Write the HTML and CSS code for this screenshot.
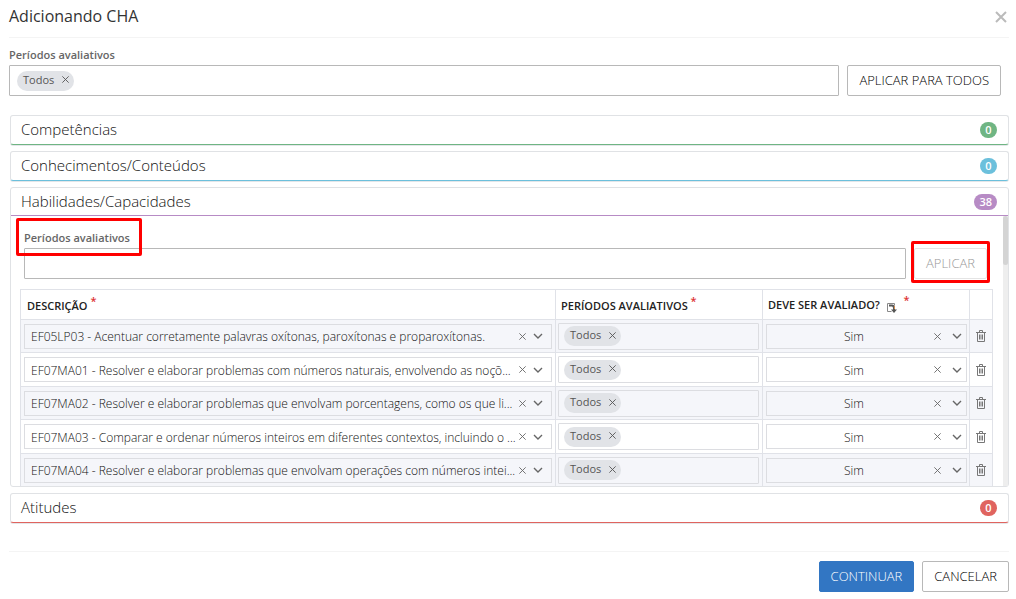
FILE: index.html
```html
<!DOCTYPE html>
<html lang="pt-BR">
<head>
<meta charset="utf-8">
<title>Adicionando CHA</title>
<link rel="stylesheet" href="styles.css">
</head>
<body>
<svg class="defs" aria-hidden="true">
  <symbol id="x" viewBox="0 0 10 10"><path d="M1.500 1.500l7 7M8.500 1.500l-7 7" fill="none" stroke="currentColor"/></symbol>
  <symbol id="chev" viewBox="0 0 10 10"><path d="M1 3l4 4 4-4" fill="none" stroke="currentColor" stroke-width="1.400"/></symbol>
  <symbol id="trash" viewBox="0 0 10 12"><path d="M0 2.500h10M3.500 2.500v-2h3v2M1.500 2.500v9h7v-9M3.500 4.500v5M5 4.500v5M6.500 4.500v5" fill="none" stroke="currentColor"/></symbol>
</svg>
<main class="modal">
  <header class="modal-head">
    <h1>Adicionando CHA</h1>
    <button class="close" aria-label="Fechar"><svg viewBox="0 0 12 12"><path d="M1 1l10 10M11 1L1 11" fill="none" stroke="currentColor" stroke-width="2"/></svg></button>
  </header>

  <section class="apply">
    <div class="field">
      <label for="periodos">Períodos avaliativos</label>
      <div class="tags">
        <span class="chip">Todos<button aria-label="Remover Todos"><svg><use href="#x"/></svg></button></span>
        <input id="periodos" type="text">
      </div>
    </div>
    <button class="btn">APLICAR PARA TODOS</button>
  </section>

  <section class="panels">
    <div class="panel green"><h2>Competências</h2><span class="badge">0</span></div>
    <div class="panel blue"><h2>Conhecimentos/Conteúdos</h2><span class="badge">0</span></div>
    <div class="group">
      <div class="panel purple"><h2>Habilidades/Capacidades</h2><span class="badge">38</span></div>
      <div class="body">
        <div class="content">
          <div class="apply inner">
            <div class="field">
              <label class="marked" for="periodos-hab">Períodos avaliativos</label>
              <input class="tags" id="periodos-hab" type="text">
            </div>
            <div class="marked mark-btn"><button class="btn" disabled>APLICAR</button></div>
          </div>
          <table>
            <colgroup><col><col class="mid"><col class="mid"><col class="del"></colgroup>
            <thead>
              <tr>
                <th>DESCRIÇÃO <sup>*</sup></th>
                <th>PERÍODOS AVALIATIVOS <sup>*</sup></th>
                <th class="eval">DEVE SER AVALIADO? <svg class="fill" viewBox="0 0 10 11"><path d="M.5 9.500V1.500h7v2M.5 9.500h4" fill="none" stroke="#888"/><path d="M2 3.500h3q2 0 2 3v2" fill="none" stroke="#555" stroke-width="2"/><path d="M4 7.500h6L7 11z" fill="#555"/><path d="M7.500 4v3" stroke="#d38b4d"/></svg> <sup>*</sup></th>
                <th></th>
              </tr>
            </thead>
            <tbody id="rows"></tbody>
          </table>
        </div>
        <div class="scroll"><div class="thumb"></div></div>
      </div>
    </div>
    <div class="panel red"><h2>Atitudes</h2><span class="badge">0</span></div>
  </section>

  <footer>
    <button class="btn primary">CONTINUAR</button>
    <button class="btn">CANCELAR</button>
  </footer>
</main>
<script src="rows.js"></script>
</body>
</html>
```
FILE: rows.js
```js
const skills = [
  "EF05LP03 - Acentuar corretamente palavras oxítonas, paroxítonas e proparoxítonas.",
  "EF07MA01 - Resolver e elaborar problemas com números naturais, envolvendo as noçõ...",
  "EF07MA02 - Resolver e elaborar problemas que envolvam porcentagens, como os que li...",
  "EF07MA03 - Comparar e ordenar números inteiros em diferentes contextos, incluindo o ...",
  "EF07MA04 - Resolver e elaborar problemas que envolvam operações com números intei..."
];
const combo = (text, label, cls) => `
  <div class="combo ${cls}">
    <select aria-label="${label}"><option>${text}</option></select>
    <button aria-label="Limpar"><svg><use href="#x"/></svg></button>
    <svg class="chev"><use href="#chev"/></svg>
  </div>`;
document.getElementById("rows").innerHTML = skills.map(s => `
  <tr>
    <td>${combo(s, "Descrição", "desc")}</td>
    <td class="per"><div class="tags small"><span class="chip">Todos<button aria-label="Remover Todos"><svg><use href="#x"/></svg></button></span><input type="text" aria-label="Períodos avaliativos"></div></td>
    <td class="sim">${combo("Sim", "Deve ser avaliado?", "yes")}</td>
    <td class="act"><button aria-label="Excluir"><svg class="trash"><use href="#trash"/></svg></button></td>
  </tr>`).join("");
```
FILE: styles.css
```css
* { box-sizing: border-box; }
body { margin: 0; background: #fff; color: #333; font: 12px/16px "Open Sans", "Noto Sans", sans-serif; }
h1, h2 { margin: 0; font-weight: 400; }
button, input, select { font: inherit; color: inherit; margin: 0; padding: 0; border: 0; background: none; border-radius: 0; }
button { cursor: pointer; }
svg { display: block; }
.defs { display: none; }
.modal { padding: 0 7px 0 9px; }

.modal-head { display: flex; align-items: center; justify-content: space-between; height: 38px; padding-bottom: 5px; border-bottom: 1px solid #f4f4f4; }
h1 { font-size: 16px; line-height: 22px; }
.close { color: #bbb; padding: 3px 2px 1px; }
.close svg { width: 12px; height: 12px; }

.apply { display: flex; align-items: flex-end; gap: 8px; padding: 9px 8px 0 0; }
.field { flex: 1; min-width: 0; }
label { display: block; width: max-content; padding-bottom: 2px; font-size: 11px; line-height: 16px; font-weight: 600; color: #666; }
.tags { display: flex; align-items: center; width: 100%; height: 31px; padding: 0 7px; border: 1px solid #b8b8b8; border-radius: 1px; }
.tags input { flex: 1; min-width: 0; }
.chip { display: flex; align-items: center; gap: 7px; height: 20px; padding: 0 4px 0 6px; border-radius: 10px; background: #e1e3e7; font-size: 11px; line-height: 18px; padding-bottom: 2px; color: #555; }
.chip svg { width: 9px; height: 9px; }
.btn { height: 31px; padding: 0 11px 2px; border: 1px solid #b8b8b8; border-radius: 2px; font-size: 13px; font-weight: 300; color: #000; white-space: nowrap; }

.panels { display: flex; flex-direction: column; gap: 6px; padding: 19px 0 0 1px; }
.panel { display: flex; align-items: center; justify-content: space-between; height: 30px; padding: 0 11px 0 10px; border: 1px solid #e0e2e5; border-bottom: 1px solid var(--c); border-radius: 3px; box-shadow: 0 1px 0 #e4e6e9; }
h2 { padding-bottom: 2px; font-size: 15px; line-height: 20px; font-weight: 300; color: #111; }
.badge { height: 16px; min-width: 17px; padding: 0 5px; border-radius: 8px; background: var(--c); color: #fff; font-size: 11px; line-height: 16px; font-weight: 600; text-align: center; }
.green { --c: #6fb583; }
.blue { --c: #6cc0dc; }
.purple { --c: #b78bc5; }
.red { --c: #e0645f; }
.group { border: 1px solid #e0e2e5; border-radius: 3px; }
.group .panel { height: 28px; border-width: 0 0 1px; border-radius: 0; box-shadow: none; }

.body { display: flex; max-height: 270px; overflow: hidden; }
.content { flex: 1; min-width: 0; padding: 0 10px 0 9px; }
.scroll { width: 5px; background: #eee; }
.thumb { height: 49px; border-radius: 3px; background: #d4d4d4; }
.inner { padding: 14px 6px 10px 4px; }
.marked { position: relative; }
.marked::after { content: ""; position: absolute; inset: -12px -12px -8px -8px; border: 3px solid #f00; border-radius: 2px; pointer-events: none; }
.mark-btn::after { inset: -7px -3px -4px; }
.btn:disabled { color: #999; border-color: #e4e4e4; }

table { width: 100%; table-layout: fixed; border-spacing: 0; border-left: 1px solid #e0e2e8; border-top: 1px solid #e0e2e8; }
.mid { width: 207px; }
.del { width: 23px; }
th, td { padding: 0 3px; border-right: 1px solid #e0e2e8; border-bottom: 1px solid #e0e2e8; }
th { height: 30px; padding: 3px 5px 0; text-align: left; font-size: 11px; font-weight: 600; color: #222; white-space: nowrap; }
th:first-child { padding-left: 6px; }
th.eval { padding-top: 0; }
sup { font-size: 11px; line-height: 0; color: #d33; }
.fill { display: inline-block; width: 10px; height: 11px; margin: 0 4px; vertical-align: -4px; }
tbody tr { height: 33px; }
tbody tr:nth-child(even) { height: 34px; }
tbody tr:nth-child(odd) { background: #f5f6fa; }
.per { padding: 0 3px 0 2px; }
.sim { padding: 0 2px 0 3px; }
.combo, .small { border: 1px solid #dcdde1; }
.combo { display: flex; align-items: center; height: 25px; padding: 0 8px 0 6px; color: #666; }
.combo select { appearance: none; flex: 1; min-width: 0; height: 23px; padding-top: 2px; outline: 0; font-weight: 300; color: #111; }
.combo svg { width: 9px; height: 9px; }
.combo .chev { width: 10px; height: 10px; margin-left: 6px; }
.yes select { padding-left: 4px; text-align: center; text-align-last: center; }
.yes { padding: 0 4px; }
.yes .chev { margin-left: 10px; }
.small { height: 27px; padding: 0 5px; }
.act { padding: 0; }
.act button { display: block; margin: 0 auto; color: #777; }
.trash { width: 10px; height: 12px; }

footer { display: flex; justify-content: flex-end; gap: 8px; margin-top: 28px; padding-top: 9px; border-top: 1px solid #f4f4f4; }
.primary { background: #3276c3; border-color: #3276c3; color: #fff; }
```
